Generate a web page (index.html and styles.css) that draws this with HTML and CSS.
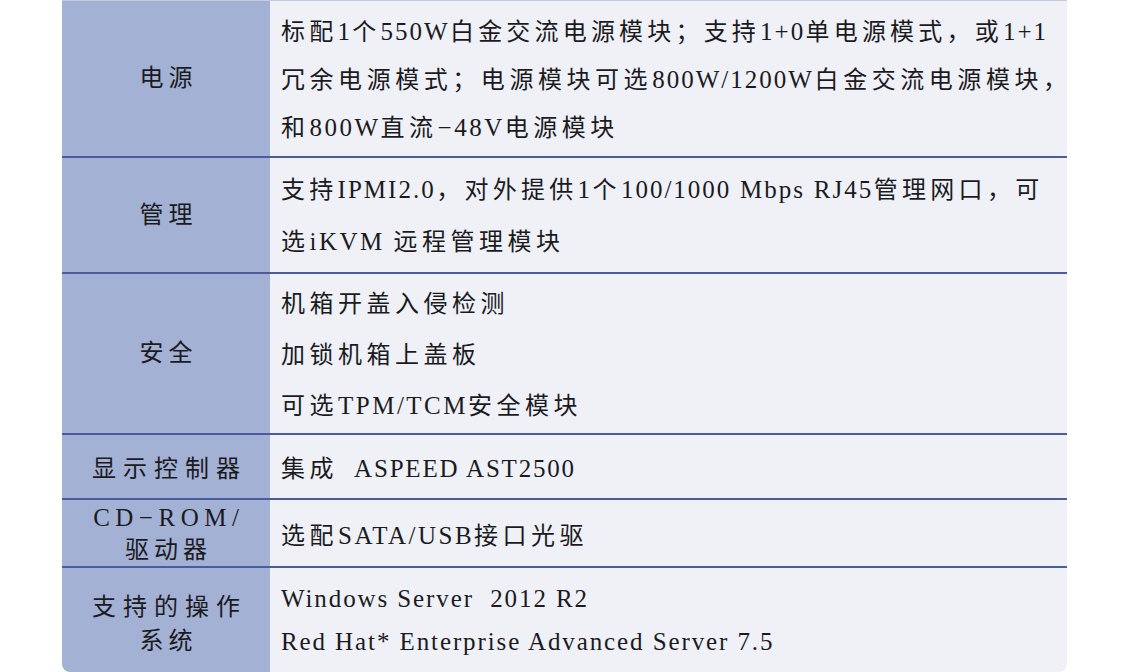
FILE: index.html
```html
<!DOCTYPE html>
<html>
<head>
<meta charset="utf-8">
<link rel="stylesheet" href="styles.css">
</head>
<body>
<div class="spec">
  <div class="row r1">
    <div class="head lift"><span>电源</span></div>
    <div class="cell">
      <div class="j w1">标配<span class="en">1</span>个<span class="en">550W</span>白金交流电源模块；支持<span class="en">1+0</span>单电源模式，或<span class="en">1+1</span></div>
      <div class="j w2">冗余电源模式；电源模块可选<span class="en">800W/1200W</span>白金交流电源模块<span class="tail">，</span></div>
      <div>和<span class="en">800W</span>直流<span class="en">−48V</span>电源模块</div>
    </div>
  </div>
  <div class="row r2">
    <div class="head lift"><span>管理</span></div>
    <div class="cell">
      <div class="j w3">支持<span class="en">IPMI2.0</span>，对外提供<span class="en">1</span>个<span class="en">100/1000 Mbps RJ45</span>管理网口，可</div>
      <div>选<span class="en">iKVM </span>远程管理模块</div>
    </div>
  </div>
  <div class="row r3">
    <div class="head lift"><span>安全</span></div>
    <div class="cell">
      <div>机箱开盖入侵检测</div>
      <div>加锁机箱上盖板</div>
      <div>可选<span class="en">TPM/TCM</span>安全模块</div>
    </div>
  </div>
  <div class="row r4">
    <div class="head"><span class="wide">显示控制器</span></div>
    <div class="cell">
      <div>集成<span class="en tight">&nbsp; ASPEED AST2500</span></div>
    </div>
  </div>
  <div class="row r5">
    <div class="head h2line"><span class="en-head">CD−ROM/</span><span>驱动器</span></div>
    <div class="cell">
      <div>选配<span class="en">SATA/USB</span>接口光驱</div>
    </div>
  </div>
  <div class="row r6">
    <div class="head h2line h6"><span class="wide">支持的操作</span><span>系统</span></div>
    <div class="cell latin">
      <div>Windows Server&nbsp; 2012 R2</div>
      <div>Red Hat* Enterprise Advanced Server 7.5</div>
    </div>
  </div>
</div>
</body>
</html>
```

FILE: styles.css
```css
html, body {
  margin: 0;
  padding: 0;
  background: #ffffff;
}

body {
  width: 1130px;
  height: 672px;
  overflow: hidden;
  font-family: "Liberation Serif", "Noto Sans CJK SC", serif;
  color: #1b1b1e;
}

.spec {
  margin-left: 62px;
  width: 1005px;
  border-top: 1px solid #c3c9e0;
}

.row {
  display: grid;
  grid-template-columns: 208px 797px;
  border-bottom: 2px solid #4a5c9b;
}

.row:last-child {
  border-bottom: none;
}

.row:last-child .head {
  border-bottom-left-radius: 8px;
}

.row:last-child .cell {
  border-bottom-right-radius: 8px;
}

.head {
  background: #a3b1d5;
  display: flex;
  flex-direction: column;
  align-items: center;
  justify-content: center;
  font-family: "Noto Sans CJK SC", sans-serif;
  font-size: 24px;
  letter-spacing: 5px;
  white-space: nowrap;
}

.head.lift {
  padding-bottom: 6px;
}

.head span {
  display: block;
  padding-left: 5px;
}

.head .wide {
  letter-spacing: 7px;
  padding-left: 7px;
}

.head .en-head {
  font-family: "Liberation Serif", serif;
  font-size: 25px;
  letter-spacing: 5.5px;
  padding-left: 5.5px;
}

.h2line {
  line-height: 30px;
}

.h6 {
  line-height: 34px;
  padding-top: 4px;
}

.cell {
  background: #eff1f7;
  display: flex;
  flex-direction: column;
  justify-content: center;
  padding-left: 11px;
  font-family: "Noto Sans CJK SC", sans-serif;
  font-size: 24px;
  letter-spacing: 4.5px;
  white-space: nowrap;
}

.en {
  font-family: "Liberation Serif", serif;
  font-size: 25px;
  letter-spacing: 2.5px;
}

.en.tight {
  letter-spacing: 1.8px;
}

.j {
  text-align: justify;
  text-align-last: justify;
  letter-spacing: 3.8px;
}

.j .en {
  letter-spacing: 2px;
}

.tail {
  letter-spacing: 0;
}

.w1 { width: 767px; }
.w2 { width: 786px; }
.w3 { width: 762px; }

.latin {
  font-family: "Liberation Serif", serif;
  font-size: 25px;
  letter-spacing: 1.9px;
}

.r1 { height: 155px; }
.r1 .cell { line-height: 46px; }

.r2 { height: 114px; }
.r2 .cell { line-height: 50px; }

.r3 { height: 159px; }
.r3 .cell { line-height: 51px; }

.r4 { height: 63px; }

.r5 { height: 66px; }

.r6 { height: 104px; }
.r6 .cell { line-height: 43px; }
```
